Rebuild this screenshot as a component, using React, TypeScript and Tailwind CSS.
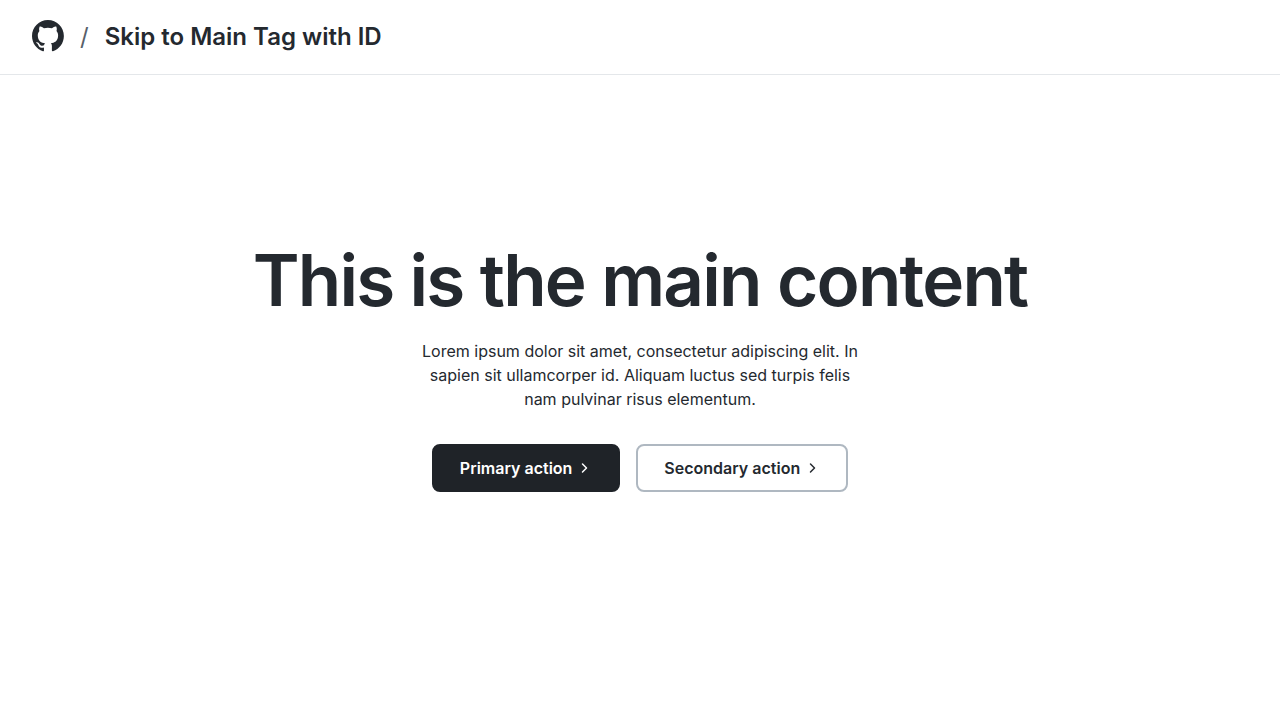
function MarkGithub() {
  return (
    <svg width="32" height="32" viewBox="0 0 98 98" fill="currentColor" aria-hidden="true">
      <path
        fillRule="evenodd"
        clipRule="evenodd"
        d="M48.854 0C21.839 0 0 22 0 49.217c0 21.756 13.993 40.172 33.405 46.69 2.427.49 3.316-1.059 3.316-2.362 0-1.141-.08-5.052-.08-9.127-13.59 2.934-16.42-5.867-16.42-5.867-2.184-5.704-5.42-7.17-5.42-7.17-4.448-3.015.324-3.015.324-3.015 4.934.326 7.523 5.052 7.523 5.052 4.367 7.496 11.404 5.378 14.235 4.074.404-3.178 1.699-5.378 3.074-6.6-10.839-1.141-22.243-5.378-22.243-24.283 0-5.378 1.94-9.778 5.014-13.2-.485-1.222-2.184-6.275.486-13.038 0 0 4.125-1.304 13.426 5.052a46.97 46.97 0 0 1 12.214-1.63c4.125 0 8.33.571 12.213 1.63 9.302-6.356 13.427-5.052 13.427-5.052 2.67 6.763.97 11.816.485 13.038 3.155 3.422 5.015 7.822 5.015 13.2 0 18.905-11.404 23.06-22.324 24.283 1.78 1.548 3.316 4.481 3.316 9.126 0 6.6-.08 11.897-.08 13.526 0 1.304.89 2.853 3.316 2.364 19.412-6.52 33.405-24.935 33.405-46.691C97.707 22 75.788 0 48.854 0z"
      />
    </svg>
  );
}

function Chevron() {
  return (
    <svg width="16" height="16" viewBox="0 0 16 16" fill="none" aria-hidden="true">
      <path
        d="M6.5 4L10.5 8L6.5 12"
        stroke="currentColor"
        strokeWidth="1.5"
        strokeLinecap="round"
        strokeLinejoin="round"
      />
    </svg>
  );
}

export default function App() {
  return (
    <div className="flex min-h-screen flex-col bg-white font-['Inter',sans-serif] text-[#24292f]">
      <header className="flex h-[75px] items-center gap-4 border-b border-[#e4e7ea] px-8">
        <a href="#home" aria-label="GitHub home" className="pb-0.5">
          <MarkGithub />
        </a>
        <span className="text-2xl text-[#57606a]">/</span>
        <a href="#main" className="text-2xl font-semibold">
          Skip to Main Tag with ID
        </a>
      </header>
      <main id="main" className="flex flex-1 flex-col items-center px-8 pt-[169px] text-center">
        <h1 className="text-[71px] leading-[72px] font-semibold tracking-tight">
          This is the main content
        </h1>
        <p className="mt-[23px] max-w-[448px] text-base">
          Lorem ipsum dolor sit amet, consectetur adipiscing elit. In sapien sit ullamcorper id.
          Aliquam luctus sed turpis felis nam pulvinar risus elementum.
        </p>
        <div className="mt-[33px] flex gap-4">
          <button className="flex h-12 items-center gap-1 rounded-lg border-2 border-[#1f2328] bg-[#1f2328] px-[26px] text-base font-semibold text-white">
            Primary action
            <Chevron />
          </button>
          <button className="flex h-12 items-center gap-1 rounded-lg border-2 border-[#afb8c1] px-[26px] text-base font-semibold">
            Secondary action
            <Chevron />
          </button>
        </div>
      </main>
    </div>
  );
}
